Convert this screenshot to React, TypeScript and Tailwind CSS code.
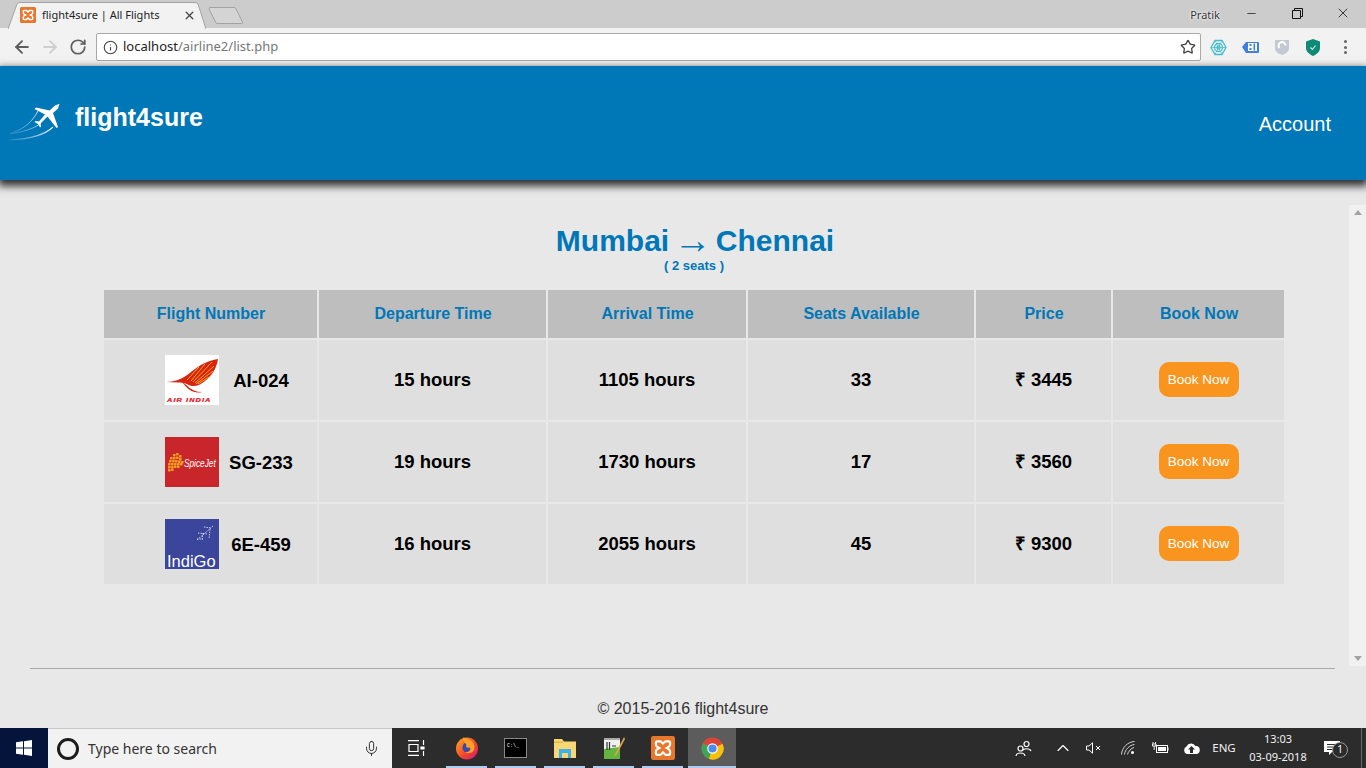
import React from "react";
import { ArrowLeft, ArrowRight, RotateCw, Info, Star, X, Mic, ChevronUp, Minus } from "lucide-react";

const flights = [
  { logo: "ai", no: "AI-024", dep: "15 hours", arr: "1105 hours", seats: "33", price: "₹ 3445" },
  { logo: "sg", no: "SG-233", dep: "19 hours", arr: "1730 hours", seats: "17", price: "₹ 3560" },
  { logo: "6e", no: "6E-459", dep: "16 hours", arr: "2055 hours", seats: "45", price: "₹ 9300" },
];

const Xampp = ({ size = 16 }: { size?: number }) => (
  <svg width={size} height={size} viewBox="0 0 16 16">
    <rect width="16" height="16" rx="1.5" fill="#e8762d" />
    <path d="M4 3.5h2.2c1 0 1.3 1.6 1.8 1.6s.8-1.6 1.8-1.6H12c1 0 1 3 0 3.6L10.4 8 12 8.9c1 .6 1 3.6 0 3.6H9.8c-1 0-1.3-1.6-1.8-1.6s-.8 1.6-1.8 1.6H4c-1 0-1-3 0-3.6L5.6 8 4 7.1c-1-.6-1-3.6 0-3.6z" fill="none" stroke="#fff" strokeWidth="1.5" />
  </svg>
);

const PlaneLogo = () => (
  <svg width="52" height="38" viewBox="0 0 52 38" className="mt-[1px]">
    <defs>
      <linearGradient id="st" x1="0" x2="1" y1="1" y2="0">
        <stop offset="0" stopColor="#fff" stopOpacity="0.15" />
        <stop offset="1" stopColor="#fff" />
      </linearGradient>
    </defs>
    <path d="M49.5 .8 L45 2.5 L39.5 7.5 L26 4.5 L24.5 6 L35 11.5 L29 18.5 L25.5 18 L24.5 19 L28 21 L30 24.5 L31 23.5 L30.5 20.5 L37.5 13.500 L46.500 25 L48 24 L43 10 L48 5.500 Z" fill="#fff" />
    <path d="M0 30.5 C10 27 20 23 28 8" stroke="url(#st)" strokeWidth="0.8" fill="none" />
    <path d="M0 37 C18 36 34 33 43 24" stroke="url(#st)" strokeWidth="1.1" fill="none" />
    <path d="M0 31 C12 29 24 26 31 20" stroke="url(#st)" strokeWidth="0.7" fill="none" />
  </svg>
);

const AirIndia = () => (
  <svg width="54" height="50" viewBox="0 0 54 50" className="shrink-0">
    <rect width="54" height="50" fill="#fff" />
    <path d="M1 27 C13 27 20 22 30 14 C38 8 46 5 53 4 C52 12 47 21 40 26 C36 29 33 31 28 31 C24 31 20 27 14 27.500 Z" fill="#d8230f" />
    <path d="M22 25 L34 12 M26 26 L40 9 M28 27 L47 7 M30 28 L49 11 M31 29 L48 16 M33 29 L44 22" stroke="#f5a623" strokeWidth="1" fill="none" />
    <path d="M17 27 C22 29 25 37 37 37 C29 39 23 35 17 27Z" fill="#d8230f" />
    <text transform="translate(2 47) scale(1.22 1)" fontFamily="'Liberation Sans',sans-serif" fontSize="6" fontWeight="700" fontStyle="italic" fill="#f0101c" stroke="#f0101c" strokeWidth="0.25" letterSpacing="0.9">AIR INDIA</text>
  </svg>
);

const SpiceJet = () => {
  const dots: [number, number][] = [[8, 17], [11, 16], [14, 18], [5, 20], [8, 20], [11, 19.5], [14, 21], [4, 23], [7, 23], [10, 23], [13, 23.5], [16, 24], [3, 26], [6, 26], [9, 26], [12, 26], [15, 26], [3, 29], [6, 29], [9, 28.5], [12, 28.5], [3, 32], [6, 31.5]];
  return (
    <svg width="54" height="50" viewBox="0 0 54 50" className="shrink-0">
      <rect width="54" height="50" fill="#c9262c" />
      {dots.map(([x, y], i) => (
        <rect key={i} x={x} y={y} width="2.6" height="2.4" rx="0.6" fill="#f4a01e" />
      ))}
      <text transform="translate(19 30) scale(0.72 1)" fontFamily="'Liberation Sans',sans-serif" fontSize="11.5" fontStyle="italic" fontWeight="400" fill="#fff">SpiceJet</text>
    </svg>
  );
};

const Indigo = () => (
  <svg width="54" height="50" viewBox="0 0 54 50" className="shrink-0">
    <rect width="54" height="50" fill="#3a459b" />
    <path d="M32 21 L48 7 M39 8 L46 9 M45 10 L44 20 M33 14 L42 15 M32 20 L38 20 M38 14 L37 21" stroke="#dfe3f5" strokeWidth="0.9" strokeDasharray="1.4 1.1" fill="none" />
    <text x="2" y="47.500" fontFamily="'Liberation Sans',sans-serif" fontSize="16.500" fontWeight="400" fill="#fff">IndiGo</text>
  </svg>
);

const Th = ({ children }: { children: React.ReactNode }) => (
  <div className="flex items-center justify-center bg-[#bebebe] pl-[1px] text-[16px] font-bold text-[#0077b7]">{children}</div>
);
const Td = ({ children }: { children: React.ReactNode }) => (
  <div className="flex items-center justify-center bg-[#dfdfdf] pb-[1px] text-[18.5px] font-bold text-black">{children}</div>
);

const TaskBtn = ({ children, active }: { children: React.ReactNode; active?: boolean }) => (
  <div className={"relative flex h-full items-center justify-center " + (active ? "ml-[1px] w-[48px] bg-[#5c5c5c]" : "w-[49px]")}>
    {children}
    <div className={"absolute bottom-0 h-[2px] bg-[#aeccf0] " + (active ? "inset-x-0" : "inset-x-[4px]")} />
  </div>
);

export default function App() {
  return (
    <div className="flex h-[768px] w-[1366px] flex-col overflow-hidden bg-[#e8e8e8] font-['Liberation_Sans',sans-serif]">
      {/* tab strip */}
      <div className="flex h-[28px] shrink-0 items-end bg-[#cccccc] pl-[8px]">
        <div className="relative flex h-[26px] w-[198px] items-center pl-[12px]">
          <svg className="absolute inset-0" width="198" height="27" viewBox="0 0 198 27">
            <path d="M0 27 L9 2 Q10 .5 12 .5 H187 Q189 .5 190 2 L198 27" fill="#f2f2f2" stroke="#a3a3a3" />
          </svg>
          <div className="relative flex items-center">
            <Xampp />
            <span className="ml-[6px] w-[141px] font-['Noto_Sans',sans-serif] text-[11px] whitespace-nowrap text-[#222]">flight4sure | All Flights</span>
            <X size={13} strokeWidth={2.4} className="text-[#444]" />
          </div>
        </div>
        <svg width="36" height="19" viewBox="0 0 36 19" className="mb-[3px] ml-[2px]">
          <path d="M2 1.5 H26 Q27.5 1.5 28 3 L34.5 16 Q35 17.5 33.5 17.5 H9 Q8 17.5 7.5 16 L1 3 Q.8 1.5 2 1.5Z" fill="#d4d4d4" stroke="#a3a3a3" />
        </svg>
        <div className="flex-1" />
        <div className="flex h-full items-start">
          <span className="mt-[8px] mr-[8px] font-['Noto_Sans',sans-serif] text-[11px] leading-[14px] text-[#333] [text-shadow:0_0_3px_#fff,0_0_2px_#fff]">Pratik</span>
          <div className="flex h-[26px] w-[46px] items-center justify-center"><Minus size={13} strokeWidth={1.2} className="text-black" /></div>
          <div className="flex h-[26px] w-[46px] items-center justify-center">
            <svg width="11" height="11" viewBox="0 0 11 11" fill="none" stroke="#111"><path d="M.5 2.5h8v8h-8z" /><path d="M2.5 2.5v-2h8v8h-2" /></svg>
          </div>
          <div className="flex h-[26px] w-[46px] items-center justify-center"><X size={16} strokeWidth={1.1} className="text-black" /></div>
        </div>
      </div>

      {/* toolbar */}
      <div className="flex h-[38px] shrink-0 items-center bg-[#f2f2f2] pl-[12px]">
        <ArrowLeft size={20} strokeWidth={2.3} className="text-[#5f5f5f]" />
        <ArrowRight size={20} strokeWidth={2.3} className="ml-[8px] text-[#cfcfcf]" />
        <RotateCw size={18} strokeWidth={2.3} className="ml-[9px] text-[#5f5f5f]" />
        <div className="ml-[9px] flex h-[28px] w-[1105px] items-center rounded-[2px] border border-[#a9a9a9] bg-white pl-[6px]">
          <Info size={15} strokeWidth={1.8} className="text-[#444]" />
          <span className="ml-[5px] font-['Noto_Sans',sans-serif] text-[13px] text-[#777]"><span className="text-[#222]">localhost</span>/airline2/list.php</span>
          <div className="flex-1" />
          <Star size={16} strokeWidth={2} className="mr-[4px] text-[#444]" />
        </div>
        <div className="ml-[1px] flex w-[32px] justify-center">
          <svg width="17" height="17" viewBox="0 0 17 17" fill="none" stroke="#46bccb" strokeWidth="1.3">
            <path d="M5 1.5h7l4 7-4 7H5l-4-7z" /><circle cx="8.5" cy="8.5" r="4" /><circle cx="8.5" cy="8.5" r="1.6" /><path d="M5 1.5l3.5 7 3.5-7M1 8.5h15M5 15.5l3.5-7 3.5 7" strokeWidth=".7" />
          </svg>
        </div>
        <div className="flex w-[32px] justify-center">
          <svg width="17" height="14" viewBox="0 0 17 14">
            <path d="M0 7 L4 2 H16 a1 1 0 0 1 1 1 V12 a1 1 0 0 1-1 1 H4 Z" fill="#3f7fe0" />
            <rect x="6" y="3" width="9" height="8" fill="#fff" /><rect x="7.5" y="4" width="2" height="2" fill="#3f7fe0" /><rect x="7.5" y="8" width="2" height="2" fill="#3f7fe0" /><rect x="11.5" y="3.5" width="1.6" height="7" fill="#3f7fe0" />
          </svg>
        </div>
        <div className="flex w-[31px] justify-center">
          <svg width="14" height="16" viewBox="0 0 14 16">
            <path d="M0 1 H14 V9 C14 13 10 15 7 16 C4 15 0 13 0 9Z" fill="#c3c8d2" />
            <path d="M4.5 9 A3.5 3.5 0 1 1 10.5 6.5" fill="none" stroke="#fff" strokeWidth="2" />
          </svg>
        </div>
        <div className="flex w-[32px] justify-center">
          <svg width="14" height="17" viewBox="0 0 14 17">
            <path d="M7 0 L14 2.5 V9 C14 13 10 15.500 7 17 C4 15.500 0 13 0 9 V2.500Z" fill="#0f8a76" />
            <path d="M4.500 8.500 L6.500 10.500 L9.500 6.500" fill="none" stroke="#cfeee6" strokeWidth="1.100" />
          </svg>
        </div>
        <div className="ml-[15px] flex flex-col gap-[2.500px]">
          <div className="size-[3px] rounded-full bg-[#666]" /><div className="size-[3px] rounded-full bg-[#666]" /><div className="size-[3px] rounded-full bg-[#666]" />
        </div>
      </div>

      {/* site header */}
      <header className="relative z-10 flex h-[114px] shrink-0 items-start bg-[#0077b7] pl-[10px] shadow-[0_4px_8px_2px_rgba(0,0,0,0.8)]">
        <div className="mt-[36px]"><PlaneLogo /></div>
        <span className="mt-[35px] ml-[13px] text-[25px] leading-[32px] font-bold text-white">flight4sure</span>
        <span className="mt-[46px] ml-auto mr-[35px] text-[20px] leading-[24px] text-white">Account</span>
      </header>

      {/* body */}
      <div className="flex h-[488px] shrink-0">
        <main className="w-[1349px] pl-[104px]">
          <div className="w-[1180px]">
            <h1 className="mt-[44px] pl-[2px] text-center text-[30px] leading-[34px] font-bold text-[#0077b7]">Mumbai <span className="relative top-[2px] mx-[-4px] font-['Liberation_Serif',serif] text-[38px] leading-[0] font-normal">→</span> Chennai</h1>
            <p className="text-center text-[13px] leading-[15px] font-bold text-[#0077b7]">( 2 seats )</p>
            <div className="mt-[17px] grid grid-cols-[213px_227px_198px_226px_135px_171px] grid-rows-[48px_80px_80px_80px] gap-[2px]">
              <Th>Flight Number</Th><Th>Departure Time</Th><Th>Arrival Time</Th><Th>Seats Available</Th><Th>Price</Th><Th>Book Now</Th>
              {flights.map((f) => (
                <React.Fragment key={f.no}>
                  <div className="flex items-center bg-[#dfdfdf] pl-[61px] text-[18.5px] font-bold text-black">
                    {f.logo === "ai" ? <AirIndia /> : f.logo === "sg" ? <SpiceJet /> : <Indigo />}
                    <span className="mt-[1px] w-[84px] text-center">{f.no}</span>
                  </div>
                  <Td>{f.dep}</Td>
                  <Td>{f.arr}</Td>
                  <Td>{f.seats}</Td>
                  <Td>{f.price}</Td>
                  <div className="flex items-center justify-center bg-[#dfdfdf] pb-[1px]">
                    <button className="h-[35px] w-[80px] rounded-[10px] bg-[#f9951e] pt-[1px] text-[13.5px] text-white">Book Now</button>
                  </div>
                </React.Fragment>
              ))}
            </div>
          </div>
        </main>
        <div className="mt-[25px] mb-[2px] flex w-[17px] flex-col items-center justify-between bg-[#f1f1f1] py-[5px]">
          <svg width="8" height="5" viewBox="0 0 8 5"><path d="M0 5 L4 0 L8 5Z" fill="#a3a3a3" /></svg>
          <svg width="8" height="5" viewBox="0 0 8 5"><path d="M0 0 L4 5 L8 0Z" fill="#a3a3a3" /></svg>
        </div>
      </div>

      {/* footer */}
      <footer className="h-[60px] shrink-0 px-[30px]">
        <div className="mr-[1px] h-[1px] bg-[#a8a8a8]" />
        <p className="mt-[30px] text-center text-[16px] leading-[20px] text-[#333]">© 2015-2016 flight4sure</p>
      </footer>

      {/* taskbar */}
      <div className="flex h-[40px] shrink-0 items-center bg-[#2c2c2c] text-white">
        <div className="flex h-full w-[48px] items-center justify-center bg-[#04143a]">
          <svg width="16" height="16" viewBox="0 0 16 16" fill="#fff"><path d="M0 2.300 L7 1.300 V7.500 H0Z M8 1.200 L16 0 V7.500 H8Z M0 8.500 H7 V14.700 L0 13.700Z M8 8.500 H16 V16 L8 14.800Z" /></svg>
        </div>
        <div className="flex h-full w-[344px] items-center border-t border-[#c8c8c8] bg-[#f2f2f2] pl-[9px] text-[#333]">
          <div className="size-[22px] rounded-full border-[3px] border-[#1c1c1c]" />
          <span className="ml-[9px] font-['Noto_Sans',sans-serif] text-[14px] text-[#333]">Type here to search</span>
          <div className="flex-1" />
          <Mic size={17} strokeWidth={1.3} className="mr-[12px] text-[#222]" />
        </div>
        <div className="flex h-full w-[49px] items-center justify-center">
          <svg width="17" height="16" viewBox="0 0 17 16" fill="none" stroke="#fff" strokeWidth="1.200">
            <path d="M0 .6h11M0 15.400h11M1 4.500h9v7H1zM15.500 0v5M15.500 11v5" /><path d="M13 7h3v2h-3z" fill="#fff" />
          </svg>
        </div>
        <div className="w-[1px]" />
        <TaskBtn>
          <svg width="24" height="24" viewBox="0 0 24 24">
            <defs><linearGradient id="ff" x1="0" y1="0" x2="1" y2="1"><stop offset="0" stopColor="#ffb01f" /><stop offset=".55" stopColor="#f5492a" /><stop offset="1" stopColor="#d3147a" /></linearGradient></defs>
            <circle cx="12" cy="12.500" r="11" fill="url(#ff)" />
            <circle cx="13" cy="11.500" r="5.500" fill="#3b4aa8" />
            <path d="M8 1.500 C14 3 20 5 19.500 12 C19 17 13 18.500 10 16 C14 16.500 16 14 15 11.500 C13 12.500 10 11 11.500 8.500 C9.500 7 8 4 8 1.500Z" fill="#ffa127" />
          </svg>
        </TaskBtn>
        <TaskBtn>
          <div className="h-[20px] w-[23px] border border-[#888] bg-black pt-[4px] pl-[2px] font-['Liberation_Mono',monospace] text-[5px] leading-[6px] text-white">C:\_</div>
        </TaskBtn>
        <TaskBtn>
          <svg width="22" height="20" viewBox="0 0 22 20">
            <path d="M0 1 H8 L10 3.500 H22 V20 H0Z" fill="#f8d775" /><rect x="0" y="3.500" width="9" height="1.500" fill="#e5b94c" />
            <path d="M5 11 H17 V20 H14 V15 H8 V20 H5Z" fill="#3fb0ea" />
          </svg>
        </TaskBtn>
        <TaskBtn>
          <svg width="22" height="24" viewBox="0 0 22 24">
            <path d="M1 2 H17 V23 H1Z" fill="#f0f0f0" /><path d="M1 13 L17 11 V23 H1Z" fill="#62b53e" /><rect x="1" y="2" width="16" height="2" fill="#aaa" />
            <path d="M4 6v8M6.500 6v8M9 10h4" stroke="#333" strokeWidth="1.200" />
            <path d="M21 1 L12 18 L10.500 21 L13.500 19 L22 3Z" fill="#d9a441" />
          </svg>
        </TaskBtn>
        <TaskBtn><Xampp size={24} /></TaskBtn>
        <TaskBtn active>
          <svg width="23" height="23" viewBox="0 0 24 24">
            <circle cx="12" cy="12" r="11.500" fill="#db4437" />
            <path d="M12 12 L22.500 7 A11.500 11.500 0 0 1 8 22.800Z" fill="#f4c20d" />
            <path d="M12 12 L8 22.800 A11.500 11.500 0 0 1 2 6.500Z" fill="#3aa757" />
            <circle cx="12" cy="12" r="5.500" fill="#fff" /><circle cx="12" cy="12" r="4.300" fill="#4c8bf5" />
          </svg>
        </TaskBtn>
        <div className="flex-1" />
        <div className="flex h-full items-center">
          <div className="flex w-[33px] justify-center">
            <svg width="17" height="17" viewBox="0 0 17 17" fill="none" stroke="#fff" strokeWidth="1.200"><circle cx="11.500" cy="4" r="2.500" /><path d="M7.500 11 C8 8 15 8 16 11" /><circle cx="5.500" cy="8.500" r="2.500" /><path d="M1 16 C1.500 12 9.500 12 10 16" /></svg>
          </div>
          <div className="w-[8px]" />
          <div className="flex w-[30px] justify-center"><ChevronUp size={20} strokeWidth={1.4} /></div>
          <div className="flex w-[32px] justify-center">
            <svg width="16" height="12" viewBox="0 0 16 12" fill="none" stroke="#fff" strokeWidth="1"><path d="M.5 4h2.500L6.500 .8v10.400L3 8H.5z" /><path d="M10 4l4 4M14 4l-4 4" /></svg>
          </div>
          <div className="flex w-[36px] justify-center">
            <svg width="15" height="14" viewBox="0 0 15 14" fill="none" stroke="#cfcfcf" strokeWidth="1"><path d="M.5 13.500C1 6.500 6.500 1 13.500.5M3.500 13.500C4 8.500 8.500 4 13.500 3.500M6.500 13.500C7 10.500 10.500 7 13 6.500" /><circle cx="11.500" cy="11.500" r="1.500" fill="#fff" stroke="none" /></svg>
          </div>
          <div className="flex w-[29px] justify-center">
            <svg width="17" height="12" viewBox="0 0 17 12" fill="none" stroke="#fff"><rect x="4.500" y="3.500" width="11" height="7" /><rect x="6" y="5" width="8" height="4" fill="#fff" stroke="none" /><path d="M1 0v2M3.500 0v2M.5 2h3.500v2H.5zM2.200 4v4" strokeWidth=".9" /><path d="M16 5.500v3" /></svg>
          </div>
          <div className="flex w-[32px] justify-center">
            <svg width="17" height="11" viewBox="0 0 17 11"><path d="M4 11 A4 4 0 0 1 3.500 3.500 A5 5 0 0 1 12.500 3 A4 4 0 0 1 13 11Z" fill="#fff" /><path d="M8.500 3 L12 6.500 H10 V10 H7 V6.500 H5Z" fill="#2c2c2c" /></svg>
          </div>
          <div className="w-[34px] text-center font-['Noto_Sans',sans-serif] text-[11.5px] text-[#f2f2f2]">ENG</div>
          <div className="flex w-[74px] flex-col items-center font-['Noto_Sans',sans-serif] text-[11px] leading-[18px] text-[#f2f2f2]">
            <span>13:03</span>
            <span>03-09-2018</span>
          </div>
          <div className="relative flex w-[36px] justify-center pr-[2px]">
            <svg width="16" height="15" viewBox="0 0 16 15"><path d="M0 0 H16 V11 H8 L5 14 V11 H0Z" fill="#fff" /><path d="M3 3.500h10M3 6h10M3 8.500h6" stroke="#2c2c2c" /></svg>
            <span className="absolute top-[1px] left-[17px] flex size-[16px] items-center justify-center rounded-full border border-[#999] bg-[#2c2c2c] font-['Noto_Sans',sans-serif] text-[10px] text-white">1</span>
          </div>
          <div className="flex w-[15px] justify-center pl-[5px]"><div className="h-[40px] w-[1px] bg-[#666]" /></div>
        </div>
      </div>
    </div>
  );
}
